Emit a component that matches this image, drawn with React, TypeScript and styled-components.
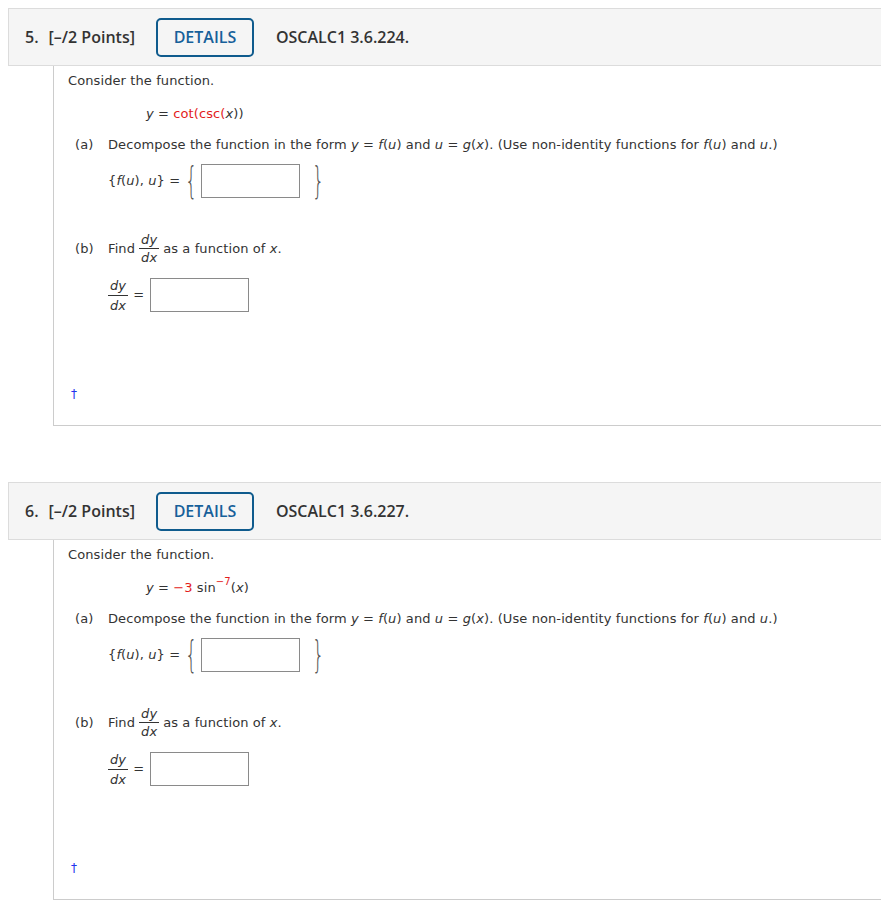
import React from "react";
import styled, { createGlobalStyle } from "styled-components";

const GlobalStyle = createGlobalStyle`
  body {
    margin: 8px 0 8px 8px;
    background: #fff;
    font-family: "DejaVu Sans", Verdana, sans-serif;
    font-size: 13px;
    letter-spacing: 0.1px;
    color: #333;
  }
`;

const Question = styled.section`
  margin-bottom: 56px;

  &:last-child {
    margin-bottom: 0;
  }
`;

const Header = styled.div`
  display: flex;
  align-items: center;
  height: 58px;
  box-sizing: border-box;
  padding-left: 16px;
  background: #f5f5f5;
  border: 1px solid #dcdcdc;
  border-right: none;
  font-family: "Open Sans", sans-serif;
  font-size: 16px;
  font-weight: 600;
  letter-spacing: 0;
  color: #333;
`;

const Num = styled.span`
  margin-right: 10px;
`;

const DetailsButton = styled.button`
  width: 98px;
  height: 39px;
  margin: 0 22px 0 21px;
  box-sizing: border-box;
  border: 2px solid #0f5b8d;
  border-radius: 5px;
  background: transparent;
  color: #17609a;
  font-family: "Open Sans", sans-serif;
  font-size: 16px;
  font-weight: 600;
  cursor: pointer;
`;

const Body = styled.div`
  margin-left: 45px;
  padding: 6px 0 22px 14px;
  border-left: 1px solid #ccc;
  border-bottom: 1px solid #ccc;
  line-height: 18px;
`;

const Equation = styled.div`
  margin: 15px 0 0 78px;
`;

const Part = styled.div`
  display: flex;
  align-items: center;
  margin: ${(p: { $top: number }) => p.$top}px 0 0 7px;
`;

const PartLabel = styled.span`
  width: 33px;
`;

const AnswerRow = styled.div`
  display: flex;
  align-items: center;
  height: 34px;
  margin: ${(p: { $top: number }) => p.$top}px 0 0 40px;
`;

const I = styled.i`
  font-style: italic;
`;

const Red = styled.span`
  color: #e31c1c;
`;

const Sup = styled.sup`
  font-size: 10px;
  line-height: 0;
  vertical-align: 7px;
`;

const Brace = styled.span`
  display: inline-block;
  font-size: 26px;
  font-weight: 200;
  color: #555;
  transform: scale(0.75, 1.45);
  margin: 0 ${(p: { $r: number }) => p.$r}px 0 ${(p: { $l: number }) => p.$l}px;
`;

const AnswerBox = styled.input`
  width: 99px;
  height: 34px;
  box-sizing: border-box;
  border: 1px solid #8a8a8a;
  background: #fff;
  padding: 0 4px;
`;

const Frac = styled.span`
  display: inline-flex;
  flex-direction: column;
  align-items: center;
  margin: 0 ${(p: { $m: number }) => p.$m}px;
  font-style: italic;
  line-height: ${(p: { $lh: number }) => p.$lh}px;
`;

const Over = styled.span`
  padding: 0 2px;
  border-bottom: 1px solid #333;
`;

const Eq = styled.span`
  margin: 0 6px 0 5px;
`;

const Dagger = styled.div`
  margin: 73px 0 0 3px;
  color: #2233ee;
  font-size: 12px;
`;

type QProps = {
  num: number;
  code: string;
  equation: React.ReactNode;
};

const Fraction = ({ lh, m }: { lh: number; m: number }) => (
  <Frac $lh={lh} $m={m}>
    <Over>dy</Over>
    <span>dx</span>
  </Frac>
);

const Problem = ({ num, code, equation }: QProps) => (
  <Question>
    <Header>
      <Num>{num}.</Num>
      <span>[–/2 Points]</span>
      <DetailsButton>DETAILS</DetailsButton>
      <span>{code}</span>
    </Header>
    <Body>
      <div>Consider the function.</div>
      <Equation>{equation}</Equation>
      <Part $top={13}>
        <PartLabel>(a)</PartLabel>
        <span>
          Decompose the function in the form <I>y</I> = <I>f</I>(<I>u</I>) and <I>u</I> = <I>g</I>(<I>x</I>). (Use
          non-identity functions for <I>f</I>(<I>u</I>) and <I>u</I>.)
        </span>
      </Part>
      <AnswerRow $top={10}>
        <span>
          {"{"}
          <I>f</I>(<I>u</I>), <I>u</I>
          {"}"} =
        </span>
        <Brace $l={3} $r={1}>
          {"{"}
        </Brace>
        <AnswerBox />
        <Brace $l={10} $r={0}>
          {"}"}
        </Brace>
      </AnswerRow>
      <Part $top={33}>
        <PartLabel>(b)</PartLabel>
        <span>Find</span>
        <Fraction lh={17} m={4} />
        <span>
          as a function of <I>x</I>.
        </span>
      </Part>
      <AnswerRow $top={12}>
        <Fraction lh={19} m={0} />
        <Eq>=</Eq>
        <AnswerBox />
      </AnswerRow>
      <Dagger>†</Dagger>
    </Body>
  </Question>
);

export default function App() {
  return (
    <>
      <GlobalStyle />
      <Problem
        num={5}
        code="OSCALC1 3.6.224."
        equation={
          <>
            <I>y</I> = <Red>cot(csc(</Red>
            <I>x</I>))
          </>
        }
      />
      <Problem
        num={6}
        code="OSCALC1 3.6.227."
        equation={
          <>
            <I>y</I> = <Red>−3</Red> sin
            <Sup>
              <Red>−7</Red>
            </Sup>
            (<I>x</I>)
          </>
        }
      />
    </>
  );
}
